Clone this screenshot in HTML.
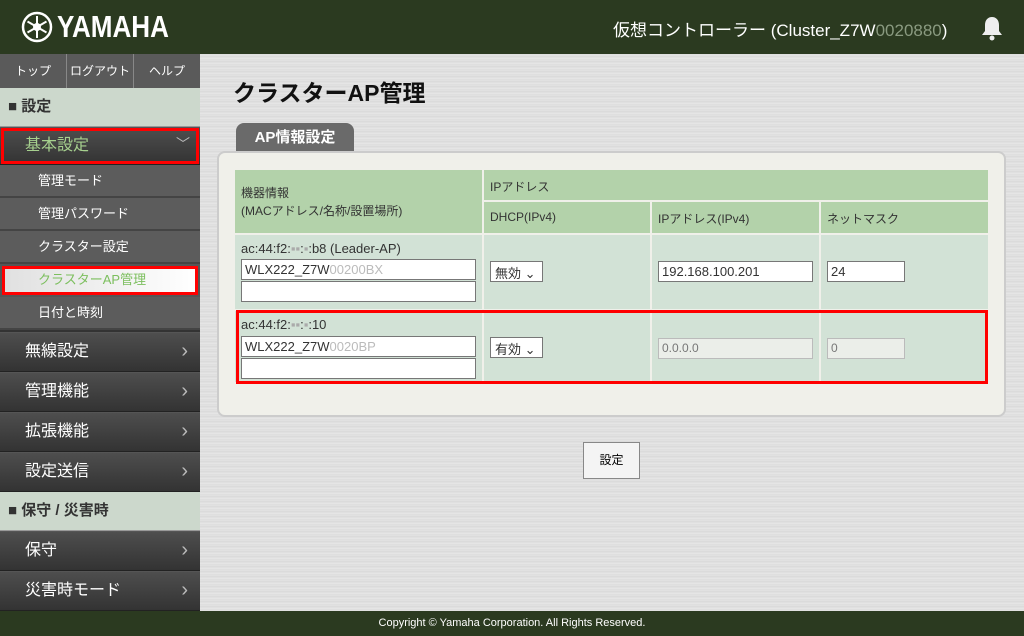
<!DOCTYPE html>
<html><head><meta charset="utf-8"><style>
*{box-sizing:border-box;margin:0;padding:0}
body{width:1024px;height:636px;overflow:hidden;position:relative;font-family:"Liberation Sans","Noto Sans CJK JP",sans-serif;background:repeating-linear-gradient(180deg,#e4e4e4 0,#d8d8d8 2px,#e8e8e8 3px,#dcdcdc 5px)}
.a{position:absolute}
#hd{left:0;top:0;width:1024px;height:54px;background:#2b3a20;color:#fff}
#ft{left:0;top:611px;width:1024px;height:25px;background:#2b3a20;color:#fff;font-size:11px;text-align:center;line-height:25px}
#sb{left:0;top:54px;width:200px;height:557px;background:#4a4a4a}
.top{height:34px;background:#5a5a5a;display:flex}
.top div{flex:1;color:#fff;font-size:12px;text-align:center;line-height:34px;border-right:1px solid #888}
.top div:last-child{border:none}
.sec{background:#ccd8cc;color:#333;font-weight:bold;font-size:15px;padding-left:8px;border-bottom:1px solid #999}
.m{background:linear-gradient(#4e4e4e,#333);color:#fff;font-size:16px;padding-left:25px;border-top:1px solid #555;border-bottom:1px solid #222;position:relative}
.m.c:after{content:"›";position:absolute;right:12px;top:-1px;color:#bbb;font-size:20px}
.s{background:#5c5c5c;color:#fff;font-size:13px;padding-left:38px;height:33px;line-height:32px;border-bottom:2px solid #444}
</style></head><body>
<div id="hd" class="a">
<svg class="a" style="left:21px;top:11px" width="32" height="32" viewBox="0 0 32 32"><circle cx="16" cy="16" r="14" fill="none" stroke="#fff" stroke-width="2.5"/><g stroke="#fff" stroke-width="2"><line x1="16" y1="5" x2="16" y2="27"/><line x1="6.5" y1="10.5" x2="25.5" y2="21.5"/><line x1="6.5" y1="21.5" x2="25.5" y2="10.5"/></g><circle cx="16" cy="16" r="4" fill="#fff"/></svg>
<div class="a" style="left:57px;top:9px;font-size:31px;font-weight:bold;transform:scaleX(0.84);transform-origin:left top;line-height:36px">YAMAHA</div>
<div class="a" style="left:613px;top:16px;font-size:17px">仮想コントローラー (Cluster_Z7W<span style="color:#8a9a80">0020880</span>)</div>
<svg class="a" style="left:981px;top:15px" width="22" height="26" viewBox="0 0 22 26"><path d="M11 2c-4 0-7 3-7 8v6l-3 4h20l-3-4v-6c0-5-3-8-7-8z" fill="#eee"/><circle cx="11" cy="23" r="2.5" fill="#eee"/></svg>
</div>
<div id="sb" class="a">
<div class="top"><div>トップ</div><div>ログアウト</div><div>ヘルプ</div></div>
<div class="sec" style="height:39px;line-height:38px">■ 設定</div>
<div class="m" style="height:38px;line-height:36px;color:#a6d08e;outline:3px solid #f00;outline-offset:-4px;">基本設定<span style="position:absolute;right:10px;top:-2px;color:#bbb;font-size:14px">﹀</span></div>
<div class="s">管理モード</div><div class="s">管理パスワード</div><div class="s">クラスター設定</div>
<div class="s" style="background:linear-gradient(90deg,#e0e0e0,#fff);color:#7cbf5e;padding-left:36px;outline:3px solid #f00;outline-offset:-5px;border:2px solid #555;line-height:28px">クラスターAP管理</div>
<div class="s">日付と時刻</div>
<div style="height:2px;background:#333"></div>
<div class="m c" style="height:40px;line-height:38px">無線設定</div>
<div class="m c" style="height:40px;line-height:38px">管理機能</div>
<div class="m c" style="height:40px;line-height:38px">拡張機能</div>
<div class="m c" style="height:40px;line-height:38px">設定送信</div>
<div class="sec" style="height:39px;line-height:38px">■ 保守 / 災害時</div>
<div class="m c" style="height:40px;line-height:38px">保守</div>
<div class="m c" style="height:40px;line-height:38px">災害時モード</div>
</div>
<div class="a" style="left:233px;top:74px;font-size:23px;font-weight:bold;color:#111">クラスターAP管理</div>
<div class="a" style="left:236px;top:123px;width:118px;height:29px;background:#6a6a6a;border-radius:8px 8px 0 0;color:#fff;font-weight:bold;font-size:15px;line-height:29px;text-align:center">AP情報設定</div>
<div class="a" style="left:217px;top:151px;width:789px;height:266px;background:#f0f0ea;border:2px solid #ccc;border-radius:8px"></div>
<div class="a" style="left:235px;top:170px;width:753px;height:212px;font-size:12px;color:#333">
<div class="a" style="left:0;top:0;width:247px;height:63px;background:#b3d2aa;padding:14px 6px;line-height:18px">機器情報<br>(MACアドレス/名称/設置場所)</div>
<div class="a" style="left:249px;top:0;width:504px;height:30px;background:#b3d2aa;padding:8px 6px">IPアドレス</div>
<div class="a" style="left:249px;top:32px;width:166px;height:31px;background:#b3d2aa;padding:8px 6px">DHCP(IPv4)</div>
<div class="a" style="left:417px;top:32px;width:167px;height:31px;background:#b3d2aa;padding:8px 6px">IPアドレス(IPv4)</div>
<div class="a" style="left:586px;top:32px;width:167px;height:31px;background:#b3d2aa;padding:8px 6px">ネットマスク</div>
<div class="a" style="left:0;top:65px;width:247px;height:74px;background:#d2e2d6"></div>
<div class="a" style="left:249px;top:65px;width:166px;height:74px;background:#d2e2d6"></div>
<div class="a" style="left:417px;top:65px;width:167px;height:74px;background:#d2e2d6"></div>
<div class="a" style="left:586px;top:65px;width:167px;height:74px;background:#d2e2d6"></div>
<div class="a" style="left:0;top:141px;width:247px;height:71px;background:#d2e2d6"></div>
<div class="a" style="left:249px;top:141px;width:166px;height:71px;background:#d2e2d6"></div>
<div class="a" style="left:417px;top:141px;width:167px;height:71px;background:#d2e2d6"></div>
<div class="a" style="left:586px;top:141px;width:167px;height:71px;background:#d2e2d6"></div>
<div class="a" style="left:6px;top:71px;font-size:13px">ac:44:f2:<span style="color:#aaa">▪▪</span>:<span style="color:#aaa">▪</span>:b8 (Leader-AP)</div>
<div class="a" style="left:6px;top:89px;width:235px;height:21px;background:#fff;border:1px solid #777;font-size:13px;padding:2px 3px">WLX222_Z7W<span style="color:#bbb">00200BX</span></div>
<div class="a" style="left:6px;top:111px;width:235px;height:21px;background:#fff;border:1px solid #777"></div>
<div class="a" style="left:255px;top:91px;width:53px;height:21px;background:#fff;border:1px solid #777;font-size:13px;padding:1px 4px">無効 ⌄</div>
<div class="a" style="left:423px;top:91px;width:155px;height:21px;background:#fff;border:1px solid #777;font-size:13px;padding:2px 3px">192.168.100.201</div>
<div class="a" style="left:592px;top:91px;width:78px;height:21px;background:#fff;border:1px solid #777;font-size:13px;padding:2px 3px">24</div>
<div class="a" style="left:6px;top:147px;font-size:13px">ac:44:f2:<span style="color:#aaa">▪▪</span>:<span style="color:#aaa">▪</span>:10</div>
<div class="a" style="left:6px;top:166px;width:235px;height:21px;background:#fff;border:1px solid #777;font-size:13px;padding:2px 3px">WLX222_Z7W<span style="color:#bbb">0020BP</span></div>
<div class="a" style="left:6px;top:188px;width:235px;height:21px;background:#fff;border:1px solid #777"></div>
<div class="a" style="left:255px;top:167px;width:53px;height:21px;background:#fff;border:1px solid #777;font-size:13px;padding:1px 4px">有効 ⌄</div>
<div class="a" style="left:423px;top:168px;width:155px;height:21px;background:#ebeee9;border:1px solid #bbb;font-size:12px;color:#777;padding:2px 3px">0.0.0.0</div>
<div class="a" style="left:592px;top:168px;width:78px;height:21px;background:#ebeee9;border:1px solid #bbb;font-size:12px;color:#777;padding:2px 3px">0</div>
</div>
<div class="a" style="left:236px;top:310px;width:752px;height:74px;border:3px solid #f00"></div>
<div class="a" style="left:583px;top:442px;width:57px;height:37px;background:#f4f4f4;border:1px solid #888;font-size:12px;text-align:center;line-height:35px">設定</div>
<div id="ft" class="a">Copyright © Yamaha Corporation. All Rights Reserved.</div>
</body></html>
